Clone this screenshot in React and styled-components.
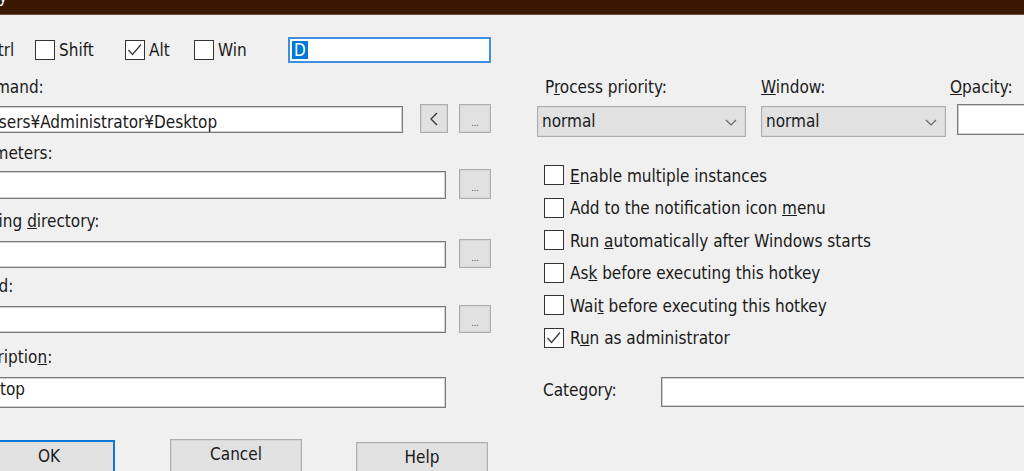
import React from "react";
import styled, { createGlobalStyle } from "styled-components";

const Global = createGlobalStyle`
  *, *::before, *::after { box-sizing: border-box; }
  html, body { margin: 0; padding: 0; background: #f0f0f0; }
  body {
    font-family: "DejaVu Sans Condensed", "DejaVu Sans", sans-serif;
    font-size: 17px;
    color: #1a1a1a;
  }
`;

const Window = styled.div`
  width: 1024px;
  height: 471px;
  overflow: hidden;
  background: #f0f0f0;
  display: flex;
  flex-direction: column;
`;

const TitleBar = styled.div`
  flex: none;
  height: 15px;
  background: #3a1800;
  border-bottom: 1px solid #6e4c38;
  overflow: hidden;
`;

const TitleText = styled.div`
  color: #fff;
  margin-left: -46px;
  margin-top: -14px;
  line-height: 20px;
  white-space: nowrap;
`;

const Body = styled.div`
  display: flex;
  align-items: flex-start;
  margin-left: -40px;
`;

const LeftPane = styled.div`
  flex: none;
  width: 531px;
  display: flex;
  flex-direction: column;
`;

const RightPane = styled.div`
  flex: none;
  width: 540px;
  margin-left: 46px;
  display: flex;
  flex-direction: column;
`;

/* checkbox */
const Box = styled.span`
  flex: none;
  width: 20px;
  height: 20px;
  background: #fff;
  border: 1px solid #333;
  display: grid;
  place-items: center;
`;

const Checkbox = ({ checked }) => (
  <Box>
    {checked && (
      <svg width="18" height="18" viewBox="0 0 18 18">
        <polyline points="2.5,9 6.5,13.5 15,3.5" fill="none" stroke="#3a3a3a" strokeWidth="1.3" />
      </svg>
    )}
  </Box>
);

/* hotkey row */
const HotkeyRow = styled.div`
  margin-top: 22px;
  height: 26px;
  display: flex;
  align-items: center;
`;

const ModCheck = styled.label`
  flex: none;
  width: ${(p) => p.$w}px;
  margin-left: ${(p) => p.$ml || 0}px;
  display: flex;
  align-items: center;
  gap: 4px;
  white-space: nowrap;
  line-height: 20px;
`;

const HotkeyInput = styled.div`
  width: 205px;
  height: 26px;
  background: #fff;
  border: 2px solid #3f8fe0;
  padding: 2px 0 0 2px;
  display: flex;
  align-items: flex-start;
`;

const Selected = styled.span`
  background: #0078d7;
  color: #fff;
  padding: 0 2px;
  line-height: 18px;
  height: 18px;
`;

/* fields */
const FieldLabel = styled.div`
  margin-top: ${(p) => p.$mt}px;
  margin-left: ${(p) => p.$ml || 0}px;
  height: 20px;
  line-height: 20px;
  white-space: nowrap;
`;

const FieldRow = styled.div`
  margin-top: ${(p) => p.$mt}px;
  height: ${(p) => p.$h}px;
  display: flex;
  align-items: flex-end;
`;

const TextBox = styled.div`
  flex: none;
  width: ${(p) => p.$w}px;
  height: ${(p) => p.$h}px;
  background: #fff;
  border: 1px solid #7a7a7a;
  box-shadow: inset 0 0 0 1px #d2d2d2;
  padding: ${(p) => p.$pt || 0}px 4px 0 1px;
  line-height: 20px;
  white-space: nowrap;
  overflow: hidden;
`;

const SideButton = styled.button`
  flex: none;
  align-self: stretch;
  width: ${(p) => p.$w}px;
  margin-left: ${(p) => p.$ml}px;
  padding: 0;
  background: #e1e1e1;
  border: 1px solid #adadad;
  box-shadow: inset 0 0 0 1px #d6d6d6;
  font: inherit;
  color: #333;
  display: flex;
  align-items: center;
  justify-content: center;
`;

const Dots = styled.span`
  font-size: 9px;
  line-height: 9px;
  margin-top: 9px;
  letter-spacing: 0;
  color: #444;
`;

const Browse = ({ ml }) => (
  <SideButton $w={32} $ml={ml}>
    <Dots>...</Dots>
  </SideButton>
);

/* dialog buttons */
const ButtonRow = styled.div`
  margin-top: 31px;
  height: 40px;
  display: flex;
  align-items: flex-start;
`;

const DialogButton = styled.button`
  flex: none;
  width: 132px;
  height: 36px;
  margin-left: ${(p) => p.$ml}px;
  margin-top: ${(p) => p.$mt || 0}px;
  background: #e1e1e1;
  border: ${(p) => (p.$default ? "2px solid #0a78d7" : "1px solid #adadad")};
  box-shadow: ${(p) => (p.$default ? "none" : "inset 0 0 0 1px #d6d6d6")};
  font: inherit;
  color: #1a1a1a;
  padding: 4px 0 0 0;
  display: flex;
  justify-content: center;
  align-items: flex-start;
  line-height: 20px;
`;

/* right pane */
const ComboHeader = styled.div`
  margin-top: 62px;
  display: grid;
  grid-template-columns: 209px 185px 1fr;
  column-gap: 15px;
  height: 20px;
`;

const ComboRow = styled.div`
  margin-top: 9px;
  display: grid;
  grid-template-columns: 209px 185px 1fr;
  column-gap: 15px;
  align-items: start;
`;

const Combo = styled.div`
  height: 31px;
  background: #e1e1e1;
  border: 1px solid #adadad;
  box-shadow: inset 0 0 0 1px #d8d8d8;
  padding: 4px 8px 0 4px;
  line-height: 20px;
  display: flex;
  justify-content: space-between;
  align-items: flex-start;
`;

const Chevron = styled.svg`
  margin-top: 8px;
`;

const OpacityBox = styled.div`
  margin-left: -4px;
  margin-top: -2px;
  height: 31px;
  background: #fff;
  border: 1px solid #7a7a7a;
  box-shadow: inset 0 0 0 1px #d2d2d2;
`;

const ComboBox = ({ value }) => (
  <Combo>
    <span>{value}</span>
    <Chevron width="12" height="7" viewBox="0 0 12 7">
      <polyline points="1,1 6,6 11,1" fill="none" stroke="#666" strokeWidth="1.2" />
    </Chevron>
  </Combo>
);

const OptionList = styled.div`
  margin-top: 28px;
  margin-left: 7px;
  display: flex;
  flex-direction: column;
  gap: 12.5px;
`;

const OptionRow = styled.label`
  height: 20px;
  display: flex;
  align-items: center;
  gap: 6px;
  white-space: nowrap;
  line-height: 20px;
  & > span:last-child {
    margin-top: 1px;
  }
`;

const CategoryRow = styled.div`
  margin-top: 29px;
  display: flex;
  align-items: flex-start;
  height: 30px;
`;

const CategoryLabel = styled.div`
  flex: none;
  width: 124px;
  padding: 3px 0 0 6px;
  line-height: 20px;
`;

const CategoryBox = styled.div`
  flex: none;
  width: 420px;
  height: 30px;
  background: #fff;
  border: 1px solid #7a7a7a;
  box-shadow: inset 0 0 0 1px #d2d2d2;
`;

const options = [
  [<><u>E</u>nable multiple instances</>, false],
  [<>Add to the notification icon <u>m</u>enu</>, false],
  [<>Run <u>a</u>utomatically after Windows starts</>, false],
  [<>As<u>k</u> before executing this hotkey</>, false],
  [<>Wai<u>t</u> before executing this hotkey</>, false],
  [<>R<u>u</u>n as administrator</>, true],
];

export default function App() {
  return (
    <>
      <Global />
      <Window>
        <TitleBar>
          <TitleText>Hotkey</TitleText>
        </TitleBar>
        <Body>
          <LeftPane>
            <HotkeyRow>
              <ModCheck $w={72} $ml={3}><Checkbox /><span>Ctrl</span></ModCheck>
              <ModCheck $w={90}><Checkbox /><span>Shift</span></ModCheck>
              <ModCheck $w={69}><Checkbox checked /><span>Alt</span></ModCheck>
              <ModCheck $w={94}><Checkbox /><span>Win</span></ModCheck>
              <HotkeyInput><Selected>D</Selected></HotkeyInput>
            </HotkeyRow>

            <FieldLabel $mt={14}><u>C</u>ommand:</FieldLabel>
            <FieldRow $mt={7} $h={29}>
              <TextBox $w={443} $h={27} $pt={5}>C:¥Users¥Administrator¥Desktop</TextBox>
              <SideButton $w={28} $ml={17}>
                <svg width="10" height="14" viewBox="0 0 10 14">
                  <polyline points="8,1 2,7 8,13" fill="none" stroke="#333" strokeWidth="1.3" />
                </svg>
              </SideButton>
              <Browse ml={11} />
            </FieldRow>

            <FieldLabel $mt={10}><u>P</u>arameters:</FieldLabel>
            <FieldRow $mt={6} $h={30}>
              <TextBox $w={486} $h={28} />
              <Browse ml={13} />
            </FieldRow>

            <FieldLabel $mt={12}>Working <u>d</u>irectory:</FieldLabel>
            <FieldRow $mt={8} $h={29}>
              <TextBox $w={486} $h={27} />
              <Browse ml={13} />
            </FieldRow>

            <FieldLabel $mt={8}><u>S</u>ound:</FieldLabel>
            <FieldRow $mt={9} $h={28}>
              <TextBox $w={486} $h={27} />
              <Browse ml={13} />
            </FieldRow>

            <FieldLabel $mt={14}>Descriptio<u>n</u>:</FieldLabel>
            <FieldRow $mt={10} $h={31}>
              <TextBox $w={486} $h={31} $pt={1}>Desktop</TextBox>
            </FieldRow>

            <ButtonRow>
              <DialogButton $ml={23} $mt={1} $default>OK</DialogButton>
              <DialogButton $ml={55}>Cancel</DialogButton>
              <DialogButton $ml={54} $mt={3}>Help</DialogButton>
            </ButtonRow>
          </LeftPane>

          <RightPane>
            <ComboHeader>
              <FieldLabel $mt={0} $ml={8}>P<u>r</u>ocess priority:</FieldLabel>
              <FieldLabel $mt={0}><u>W</u>indow:</FieldLabel>
              <FieldLabel $mt={0} $ml={-11}><u>O</u>pacity:</FieldLabel>
            </ComboHeader>
            <ComboRow>
              <ComboBox value="normal" />
              <ComboBox value="normal" />
              <OpacityBox />
            </ComboRow>

            <OptionList>
              {options.map(([text, checked], i) => (
                <OptionRow key={i}>
                  <Checkbox checked={checked} />
                  <span>{text}</span>
                </OptionRow>
              ))}
            </OptionList>

            <CategoryRow>
              <CategoryLabel>Category:</CategoryLabel>
              <CategoryBox />
            </CategoryRow>
          </RightPane>
        </Body>
      </Window>
    </>
  );
}
